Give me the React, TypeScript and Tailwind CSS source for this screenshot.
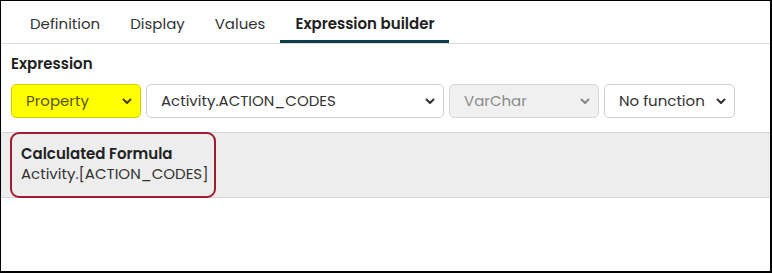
const font = { fontFamily: "Poppins, 'Open Sans', sans-serif" };

function Chevron({ color = "#333" }: { color?: string }) {
  return (
    <svg width="10" height="7" viewBox="0 0 10 7" fill="none">
      <path d="M1.5 1.5 L5 5 L8.5 1.5" stroke={color} strokeWidth="2" strokeLinecap="round" strokeLinejoin="round" />
    </svg>
  );
}

function Select({
  label,
  className,
  textClass,
  chevron,
}: {
  label: string;
  className: string;
  textClass: string;
  chevron?: string;
}) {
  return (
    <div className={`flex h-[34px] items-center justify-between rounded-[5px] border pl-[14px] pr-[8px] ${className}`}>
      <span className={`whitespace-nowrap text-[15px] ${textClass}`}>{label}</span>
      <Chevron color={chevron} />
    </div>
  );
}

export default function App() {
  return (
    <div
      className="flex h-[273px] w-[772px] flex-col overflow-hidden border-t border-l border-r-2 border-b-2 border-black bg-white text-[#333]"
      style={font}
    >
      {/* Tabs */}
      <div className="flex h-[43px] items-end border-b border-[#dcdcdc] pl-[14px]">
        <div className="px-[15px] pb-[8px] text-[15px] text-[#333]">Definition</div>
        <div className="px-[15px] pb-[8px] text-[15px] text-[#333]">Display</div>
        <div className="px-[15px] pb-[8px] text-[15px] text-[#333]">Values</div>
        <div className="border-b-[3px] border-[#0e3b4a] px-[15px] pb-[5px] text-[15px] font-semibold text-[#222]">
          Expression builder
        </div>
      </div>

      {/* Expression */}
      <div className="px-[10px] pt-[9px]">
        <div className="text-[15px] font-semibold leading-[22px] text-[#222]">Expression</div>
        <div className="mt-[9px] flex gap-[5px]">
          <Select
            label="Property"
            className="w-[130px] border-[#d6cf00] bg-[#ffff00]"
            textClass="text-[#5a5200]"
            chevron="#4a4300"
          />
          <Select label="Activity.ACTION_CODES" className="w-[298px] border-[#cfcfcf] bg-white" textClass="text-[#333]" />
          <Select
            label="VarChar"
            className="w-[150px] border-[#d6d6d6] bg-[#f0f0f0]"
            textClass="text-[#8a8a8a]"
            chevron="#888"
          />
          <Select label="No function" className="w-[131px] border-[#cfcfcf] bg-white" textClass="text-[#333]" />
        </div>
      </div>

      {/* Formula */}
      <div className="mt-[14px] flex h-[66px] border-y border-[#d6d6d6] bg-[#ededed] pl-[9px]">
        <div className="-my-px w-[206px] rounded-[9px] border-2 border-[#a01c2c] pl-[9px] pt-[10px]">
          <div className="whitespace-nowrap text-[15px] font-semibold leading-[20px] text-[#222]">Calculated Formula</div>
          <div className="whitespace-nowrap text-[15px] leading-[20px] text-[#333]">Activity.[ACTION_CODES]</div>
        </div>
      </div>
    </div>
  );
}
